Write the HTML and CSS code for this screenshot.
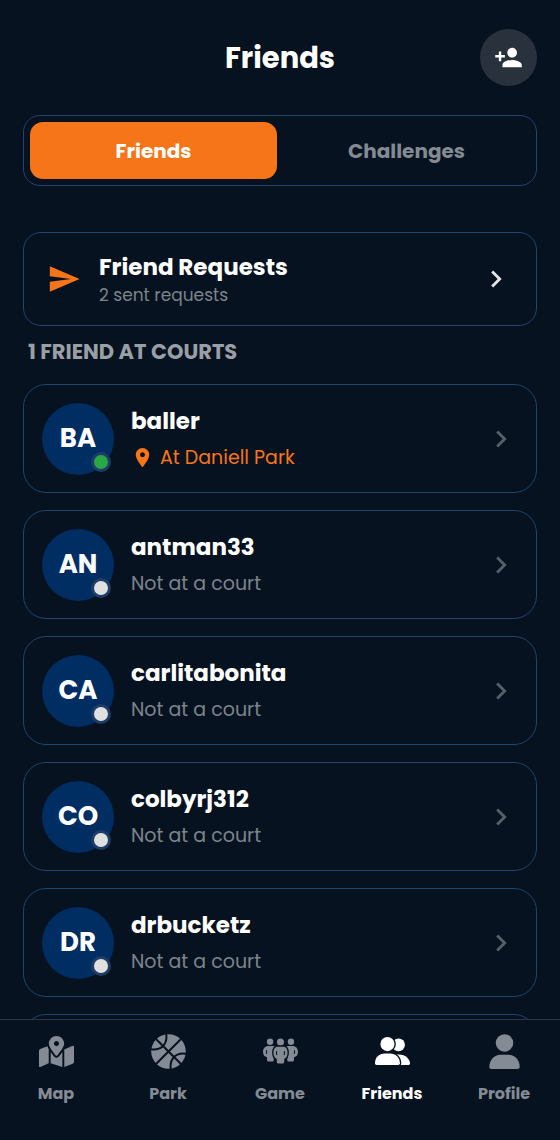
FILE: index.html
```html
<!DOCTYPE html>
<html lang="en">
<head>
<meta charset="utf-8">
<meta name="viewport" content="width=device-width, initial-scale=1">
<title>Friends</title>
<link rel="stylesheet" href="styles.css">
</head>
<body>
<svg class="sprite" aria-hidden="true">
  <symbol id="chevron" viewBox="0 0 24 24"><path d="M10 6L8.59 7.41 13.17 12l-4.58 4.59L10 18l6-6z"/></symbol>
</svg>
<div class="app">
  <header class="header">
    <h1 class="title">Friends</h1>
    <button class="add-button" type="button" aria-label="Add friend">
      <svg class="icon-add" viewBox="0 0 24 24"><path d="M15 12c2.21 0 4-1.79 4-4s-1.79-4-4-4-4 1.79-4 4 1.79 4 4 4zm-9-2V7H4v3H1v2h3v3h2v-3h3v-2H6zm9 4c-2.67 0-8 1.34-8 4v2h16v-2c0-2.66-5.33-4-8-4z"/></svg>
    </button>
  </header>
  <main class="content">
    <div class="tabs">
      <button class="tab tab-active" type="button">Friends</button>
      <button class="tab" type="button">Challenges</button>
    </div>
    <a class="requests" href="#requests">
      <svg class="icon send" viewBox="0 0 24 24"><path d="M2.01 21L23 12 2.01 3 2 10l15 2-15 2z"/></svg>
      <span class="requests-text">
        <span class="name">Friend Requests</span>
        <span class="requests-count">2 sent requests</span>
      </span>
      <svg class="icon chevron-light"><use href="#chevron"/></svg>
    </a>
    <h2 class="section-title">1 FRIEND AT COURTS</h2>
    <ul class="friends">
      <li><a class="friend" href="#baller">
        <span class="avatar">BA<span class="status online"></span></span>
        <span class="friend-text"><span class="name">baller</span><span class="place at-court"><svg class="pin" viewBox="0 0 24 24"><path d="M12 2C8.13 2 5 5.13 5 9c0 5.25 7 13 7 13s7-7.75 7-13c0-3.87-3.13-7-7-7zm0 9.5c-1.38 0-2.5-1.12-2.5-2.5s1.12-2.5 2.5-2.5 2.5 1.12 2.5 2.5-1.12 2.5-2.5 2.5z"/></svg>At Daniell Park</span></span>
        <svg class="icon chevron-dim"><use href="#chevron"/></svg>
      </a></li>
      <li><a class="friend" href="#antman33">
        <span class="avatar">AN<span class="status"></span></span>
        <span class="friend-text"><span class="name">antman33</span><span class="place">Not at a court</span></span>
        <svg class="icon chevron-dim"><use href="#chevron"/></svg>
      </a></li>
      <li><a class="friend" href="#carlitabonita">
        <span class="avatar">CA<span class="status"></span></span>
        <span class="friend-text"><span class="name">carlitabonita</span><span class="place">Not at a court</span></span>
        <svg class="icon chevron-dim"><use href="#chevron"/></svg>
      </a></li>
      <li><a class="friend" href="#colbyrj312">
        <span class="avatar">CO<span class="status"></span></span>
        <span class="friend-text"><span class="name">colbyrj312</span><span class="place">Not at a court</span></span>
        <svg class="icon chevron-dim"><use href="#chevron"/></svg>
      </a></li>
      <li><a class="friend" href="#drbucketz">
        <span class="avatar">DR<span class="status"></span></span>
        <span class="friend-text"><span class="name">drbucketz</span><span class="place">Not at a court</span></span>
        <svg class="icon chevron-dim"><use href="#chevron"/></svg>
      </a></li>
      <li class="friend"></li>
    </ul>
  </main>
  <nav class="nav">
    <a class="nav-item" href="#map">
      <svg class="nav-icon" viewBox="0 0 576 512"><path d="M288 0c-69.59 0-126 56.41-126 126 0 56.26 82.35 158.8 113.9 196.02 6.39 7.54 17.82 7.54 24.2 0C331.65 284.8 414 182.26 414 126 414 56.41 357.59 0 288 0zm0 168c-23.2 0-42-18.8-42-42s18.8-42 42-42 42 18.8 42 42-18.8 42-42 42zM20.12 215.95A32.006 32.006 0 0 0 0 245.66v250.32c0 11.32 11.43 19.06 21.94 14.86L160 448V214.92c-8.84-15.98-16.07-31.54-21.25-46.42L20.12 215.95zM288 359.67c-14.07 0-27.38-6.18-36.51-16.96-19.66-23.2-40.57-49.62-59.49-76.72v182l192 64V266c-18.92 27.09-39.82 53.52-59.49 76.72-9.13 10.77-22.44 16.95-36.51 16.95zm266.06-198.51L416 224v288l139.88-55.95A31.996 31.996 0 0 0 576 426.34V176.02c0-11.32-11.43-19.06-21.94-14.86z"/></svg>
      <span>Map</span>
    </a>
    <a class="nav-item" href="#park">
      <svg class="nav-icon" viewBox="0 0 35 35"><circle cx="17.5" cy="17.5" r="17.3"/><path class="seam" d="M4 4L31 31M31 4L4 31M0 15.3C5 16 9 15 12 12C14.7 9 16 5 15.2 0M35 19.7C30 19 26 20 23 23C20.3 26 19 30 19.8 35"/></svg>
      <span>Park</span>
    </a>
    <a class="nav-item" href="#game">
      <svg class="nav-icon" viewBox="0 0 104 104"><g id="player"><circle cx="21" cy="23" r="9.5"/><path d="M16 36H27C37 36 42 43 42 53C42 62 39 68 32 69V77Q32 82 28 82H16Q12 82 12 77V69C4 68 0 62 0 53C0 43 7 36 16 36Z"/><path class="slit" d="M11 48Q9 53 11 59"/></g><use href="#player" transform="matrix(-1 0 0 1 104 0)"/><circle cx="52" cy="24" r="10.5"/><path class="outlined" d="M44 38H60C69 38 73 46 73 56C73 66 69 72 63 74V83Q63 88 58 88H46Q41 88 41 83V74C35 72 31 66 31 56C31 46 35 38 44 38Z"/><path class="slit" d="M41 51Q39 56 41 63M63 51Q65 56 63 63"/></svg>
      <span>Game</span>
    </a>
    <a class="nav-item nav-active" href="#friends">
      <svg class="nav-icon" viewBox="0 0 104 104"><circle cx="70" cy="32" r="19"/><path d="M60 62C88 56 104 74 104 88Q104 92 100 92H60Z"/><path class="outlined" d="M0 87C0 68 14 58 28 58H45C61 58 74 70 74 87Q74 92 69 92H5Q0 92 0 87Z"/><circle class="outlined" cx="37" cy="30" r="21"/></svg>
      <span>Friends</span>
    </a>
    <a class="nav-item" href="#profile">
      <svg class="nav-icon" viewBox="0 0 104 106"><circle cx="52" cy="27" r="26.5"/><path d="M6 100C6 78 22 63 39 63H65C83 63 98 78 98 100Q98 106 92 106H12Q6 106 6 100Z"/></svg>
      <span>Profile</span>
    </a>
  </nav>
</div>
</body>
</html>
```
FILE: styles.css
```css
* { box-sizing: border-box; }

body {
  margin: 0;
  background: #06121f;
  color: #fff;
  font-family: Poppins, Inter, sans-serif;
}

a { color: inherit; text-decoration: none; }
button { border: 0; background: none; font: inherit; }
svg { display: block; fill: currentColor; flex: none; }

.sprite { position: absolute; width: 0; height: 0; }

.app { display: flex; flex-direction: column; height: 100vh; }

.header {
  display: grid;
  grid-template-columns: 57px 1fr 57px;
  align-items: center;
  padding: 29px 23px;
}

.title {
  grid-column: 2;
  margin: 0;
  text-align: center;
  font-size: 29px;
  font-weight: 700;
  line-height: 40px;
}

.add-button {
  display: grid;
  place-items: center;
  height: 57px;
  padding: 0;
  border-radius: 50%;
  background: #28313c;
  color: #fff;
}

.icon-add { width: 29px; height: 29px; }

.content { flex: 1; min-height: 0; overflow: hidden; padding: 0 23px; }

.tabs {
  display: flex;
  gap: 6px;
  padding: 6px;
  border: 1px solid #21446f;
  border-radius: 17px;
}

.tab {
  flex: 1;
  height: 57px;
  border-radius: 13px;
  color: #838a92;
  font-size: 20px;
  font-weight: 700;
}

.tab-active { background: #f67519; color: #fff; }

.requests {
  display: flex;
  align-items: center;
  gap: 18px;
  height: 94px;
  margin-top: 46px;
  padding: 0 23px;
  border: 1px solid #21446f;
  border-radius: 18px;
}

.icon { width: 34px; height: 34px; }
.send { color: #f67519; }
.chevron-light { color: #e4e6e8; }
.chevron-dim { color: #566069; }

.requests-text { display: grid; flex: 1; padding-top: 2px; }

.name { font-size: 23px; font-weight: 700; line-height: 31px; }

.requests-count { color: #7d848c; font-size: 17px; line-height: 25px; }

.section-title {
  margin: 12px 5px 18px;
  color: #9a9fa6;
  font-size: 21px;
  font-weight: 700;
  line-height: 28px;
}

.friends { display: grid; gap: 17px; margin: 0; padding: 0; list-style: none; }

.friend {
  display: flex;
  align-items: center;
  gap: 17px;
  height: 109px;
  padding: 0 18px;
  border: 1px solid #21446f;
  border-radius: 23px;
}

.avatar {
  position: relative;
  display: grid;
  flex: none;
  place-items: center;
  width: 72px;
  height: 72px;
  border-radius: 50%;
  background: #002d62;
  font-size: 26px;
  font-weight: 700;
}

.status {
  position: absolute;
  right: 3px;
  bottom: 3px;
  width: 20px;
  height: 20px;
  border: 3px solid #1d3c66;
  border-radius: 50%;
  background: #e0e0e0;
}

.online { background: #28a745; }

.friend-text { display: grid; flex: 1; gap: 7px; }

.place { color: #7d848c; font-size: 19px; line-height: 28px; }

.at-court { display: flex; align-items: center; gap: 6px; color: #f67519; }

.pin { width: 23px; height: 23px; }

.nav {
  display: grid;
  grid-template-columns: repeat(5, 1fr);
  height: 121px;
  padding-top: 14px;
  border-top: 1px solid #2b3640;
}

.nav-item {
  display: flex;
  flex-direction: column;
  align-items: center;
  gap: 13px;
  color: #848b94;
  font-size: 16px;
  font-weight: 700;
  line-height: 24px;
}

.nav-active { color: #fff; }
.nav-icon { width: 35px; height: 35px; }
.seam { fill: none; stroke: #06121f; stroke-width: 2; }
.slit { fill: none; stroke: #06121f; stroke-width: 3; }
.outlined { stroke: #06121f; stroke-width: 8; paint-order: stroke; }
```
